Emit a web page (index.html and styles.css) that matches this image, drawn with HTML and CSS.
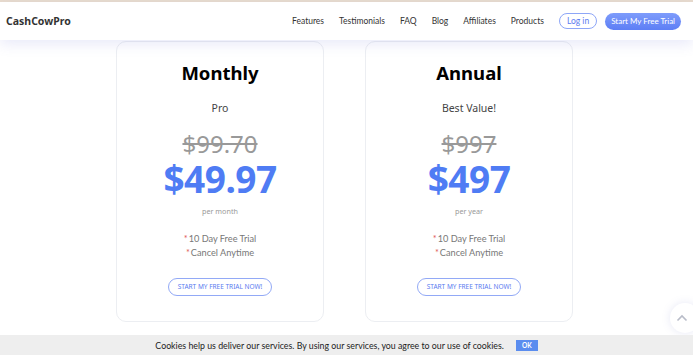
FILE: index.html
```html
<!DOCTYPE html>
<html>
<head>
  <title>CashCowPro Pricing</title>
  <link rel="stylesheet" href="styles.css">
</head>
<body>

<div class="topline"></div>
<div class="header">
  <a class="brand" href="#">CashCowPro</a>
  <div class="nav">
    <a href="#">Features</a>
    <a href="#">Testimonials</a>
    <a href="#">FAQ</a>
    <a href="#">Blog</a>
    <a href="#">Affiliates</a>
    <a href="#">Products</a>
    <a class="login" href="#">Log in</a>
    <a class="trial" href="#">Start My Free Trial</a>
  </div>
</div>

<div class="plans">
  <div class="plan">
    <h2>Monthly</h2>
    <p class="tier">Pro</p>
    <p class="old">$99.70</p>
    <p class="price">$49.97</p>
    <p class="per">per month</p>
    <ul class="perks">
      <li><span class="star">*</span>10 Day Free Trial</li>
      <li><span class="star">*</span>Cancel Anytime</li>
    </ul>
    <a class="cta" href="#">START MY FREE TRIAL NOW!</a>
  </div>
  <div class="plan">
    <h2>Annual</h2>
    <p class="tier">Best Value!</p>
    <p class="old">$997</p>
    <p class="price">$497</p>
    <p class="per">per year</p>
    <ul class="perks">
      <li><span class="star">*</span>10 Day Free Trial</li>
      <li><span class="star">*</span>Cancel Anytime</li>
    </ul>
    <a class="cta" href="#">START MY FREE TRIAL NOW!</a>
  </div>
</div>

<a class="totop" href="#">
  <svg width="12" height="8" viewBox="0 0 12 8"><path d="M1.5 6.5 L6 2 L10.5 6.5" fill="none" stroke="#b8bcc8" stroke-width="1.6"/></svg>
</a>

<div class="cookies">
  <span>Cookies help us deliver our services. By using our services, you agree to our use of cookies.</span>
  <a class="ok" href="#">OK</a>
</div>

</body>
</html>
```

FILE: styles.css
```css
body { margin: 0; font-family: "Noto Sans", "Open Sans", sans-serif; color: #333; background: #fff; overflow: hidden; }
a { text-decoration: none; }

.topline { height: 2px; background: #e9dccd; }
.header { position: relative; z-index: 2; height: 38px; display: flex; align-items: center; justify-content: space-between; padding: 0 12px 0 6px; background: #fff; box-shadow: 0 4px 14px rgba(110, 120, 220, 0.16); }
.brand { font-size: 10.5px; font-weight: bold; color: #333; }
.nav { display: flex; align-items: center; gap: 15px; font-family: Lato, "Noto Sans", sans-serif; font-size: 8.5px; }
.nav a { color: #333; }
.nav a.login { color: #5b7cf0; border: 1px solid #8ea6f7; border-radius: 10px; padding: 1px 7px; line-height: 12px; }
.nav a.trial { margin-left: -7px; color: #fff; border-radius: 10px; padding: 2px 6px; line-height: 13px; font-size: 8px; background: linear-gradient(#7e9cfb, #5d7ef5); }

.plans { display: flex; justify-content: center; gap: 41px; padding: 1px 4px 0 0; }
.plan { width: 206px; height: 279px; border: 1px solid #eceef2; border-radius: 10px; text-align: center; }
.plan h2 { margin: 18px 0 0; font-size: 18.5px; line-height: 26px; color: #000; }
.plan p { margin: 0; }
.tier { margin-top: 14px !important; font-size: 10.5px; line-height: 16px; color: #444; }
.old { margin-top: 13px !important; font-size: 24px; line-height: 30px; color: #999; text-decoration: line-through; }
.price { font-size: 37px; font-weight: bold; line-height: 40px; color: #4f7cf4; letter-spacing: -0.5px; }
.per { margin-top: 6px !important; font-size: 7.2px; line-height: 12px; color: #999; }
.perks { list-style: none; margin: 15px 0 0; padding: 0; font-family: Lato, "Noto Sans", sans-serif; font-size: 9.2px; line-height: 14px; color: #777; }
.star { color: #e05a5a; margin-right: 1px; }
.cta { display: inline-block; margin-top: 18px; padding: 3px 9px; border: 1px solid #92a9f6; border-radius: 10px; font-size: 6.5px; line-height: 10px; color: #5b7cf0; }

.totop { position: fixed; right: -7px; bottom: 22px; width: 30px; height: 30px; border-radius: 50%; background: #fff; box-shadow: 0 0 8px rgba(120, 130, 200, 0.18); display: flex; align-items: center; justify-content: center; padding-right: 6px; box-sizing: border-box; }

.cookies { position: fixed; left: 0; right: 0; bottom: 0; height: 20px; background: #eeeeee; display: flex; align-items: center; justify-content: center; gap: 12px; font-family: Lato, "Noto Sans", sans-serif; font-size: 8.8px; color: #222; }
.ok { background: #5b8def; color: #fff; font-size: 6.5px; font-weight: bold; padding: 2px 6px; }
```
